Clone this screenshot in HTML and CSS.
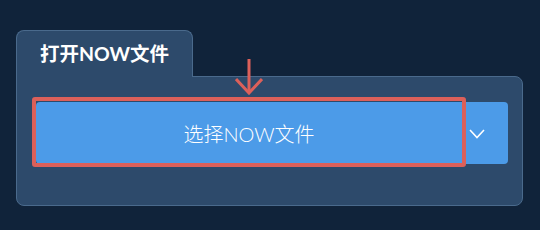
FILE: index.html
```html
<!DOCTYPE html>
<html lang="zh-CN">
<head>
    <meta charset="UTF-8">
    <title>打开NOW文件</title>
    <link rel="stylesheet" href="styles.css">
</head>
<body>
    <div class="page">
        <div class="tab">打开NOW文件</div>
        <div class="panel">
            <div class="btn-group">
                <button class="btn-main">选择NOW文件</button>
                <button class="btn-toggle">
                    <svg width="16" height="10" viewBox="0 0 16 10">
                        <polyline points="1,1 8,8.5 15,1" fill="none" stroke="#fff" stroke-width="1.6"/>
                    </svg>
                </button>
                <div class="highlight"></div>
                <svg class="pointer" width="28" height="36" viewBox="0 0 28 36">
                    <line x1="14" y1="0" x2="14" y2="34" stroke="#dc605a" stroke-width="3"/>
                    <polyline points="1,20 14,34 27,20" fill="none" stroke="#dc605a" stroke-width="3"/>
                </svg>
            </div>
        </div>
    </div>
</body>
</html>
```

FILE: styles.css
```css
body {
    margin: 0;
    background-color: #10233a;
    font-family: Lato, "Noto Sans CJK SC", sans-serif;
    color: #fff;
}

.page {
    padding: 30px 0 0 16px;
    width: 507px;
}

.tab {
    display: inline-block;
    position: relative;
    z-index: 1;
    box-sizing: border-box;
    width: 177px;
    height: 47px;
    margin-bottom: -1px;
    padding: 12px 0 0 23px;
    background-color: #2d4a6b;
    border: 1px solid #4a6a8c;
    border-bottom: none;
    border-radius: 8px 8px 0 0;
    font-size: 19.5px;
    font-weight: bold;
    line-height: 22px;
}

.panel {
    box-sizing: border-box;
    height: 130px;
    padding: 25px 14px 0 19px;
    background-color: #2d4a6b;
    border: 1px solid #4a6a8c;
    border-radius: 0 8px 8px 8px;
}

.btn-group {
    position: relative;
    display: flex;
    height: 62px;
}

.btn-group button {
    border: none;
    background-color: #4c9be8;
    color: #fff;
    font-family: inherit;
    padding: 0;
    cursor: pointer;
}

.btn-main {
    width: 410px;
    padding-left: 16px !important;
    border-radius: 4px 0 0 4px;
    font-size: 20px;
    font-weight: 300;
}

.btn-toggle {
    flex: 1;
    display: flex;
    align-items: center;
    justify-content: center;
    border-radius: 0 4px 4px 0;
}

.btn-toggle svg {
    margin-top: 2px;
}

.highlight {
    position: absolute;
    left: -4px;
    top: -5px;
    width: 434px;
    height: 70px;
    box-sizing: border-box;
    border: 4px solid #dc605a;
    border-radius: 3px;
}

.pointer {
    position: absolute;
    left: 199px;
    top: -43px;
}
```
